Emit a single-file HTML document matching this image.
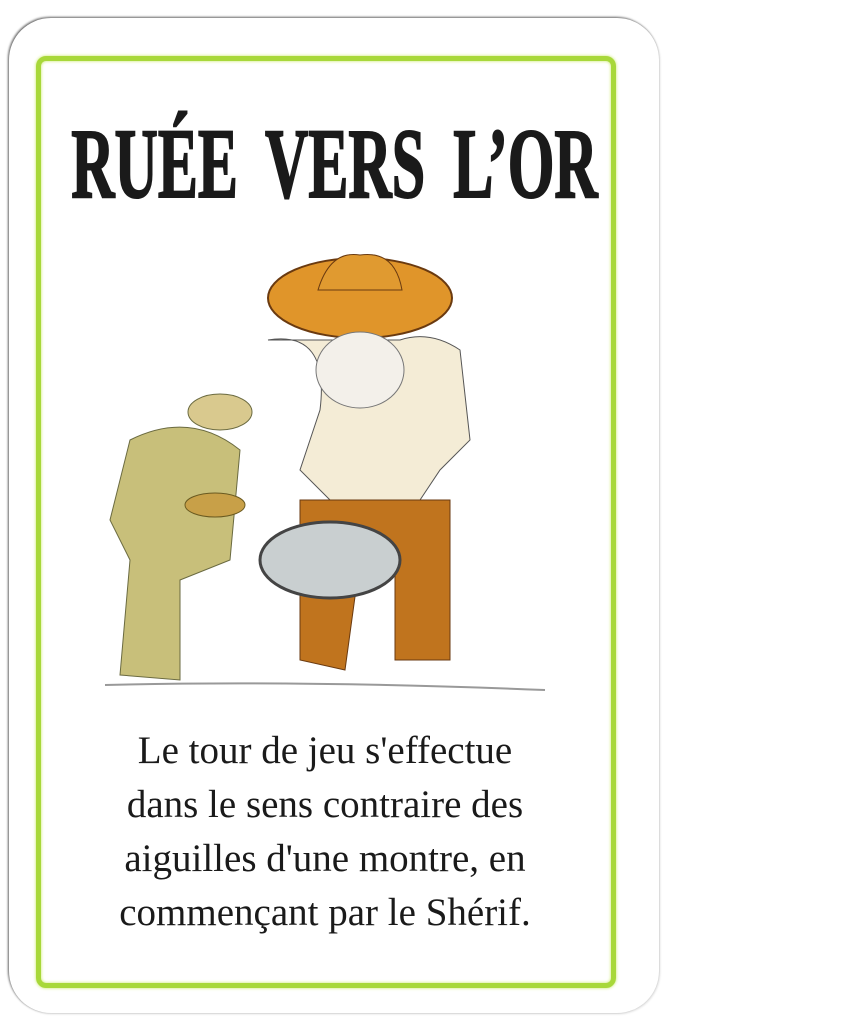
<!DOCTYPE html><html><head><style>
body{margin:0;width:864px;height:1033px;background:#fff;position:relative;overflow:hidden}
.card{position:absolute;left:9px;top:18px;width:650px;height:995px;border-radius:42px;background:#fff;box-shadow:-1px -1px 2px #666, 1px 1px 2px #ddd}
.border{position:absolute;left:36px;top:56px;width:570px;height:922px;border:5px solid #a8d83a;border-radius:10px;box-shadow:0 0 3px #c8e860, inset 0 0 3px #c8e860}
.title{position:absolute;top:106px;left:-100px;width:856px;text-align:center;font:900 100px/116px "Liberation Serif",serif;-webkit-text-stroke:2px #1a1a1a;color:#1a1a1a;transform:scaleX(0.6);transform-origin:center;word-spacing:22px;white-space:nowrap}
.txt{position:absolute;left:30px;width:590px;top:724px;text-align:center;font:39px/54px "Liberation Serif",serif;color:#1a1a1a}
</style></head><body>
<div class="card"></div>
<div class="border"></div>
<div class="title">RUÉE VERS L’OR</div>
<svg style="position:absolute;left:0;top:0" width="864" height="1033">
<ellipse cx="360" cy="298" rx="92" ry="40" fill="#e0952a" stroke="#6a3a10" stroke-width="2"/>
<path d="M318 290 Q330 250 360 255 Q395 250 402 290 Z" fill="#e09a30" stroke="#6a3a10"/>
<path d="M268 340 Q330 330 320 410 L300 470 L330 500 L420 500 L440 470 L470 440 L460 350 Q430 330 400 340 Z" fill="#f4ecd6" stroke="#555"/>
<ellipse cx="360" cy="370" rx="44" ry="38" fill="#f3f0ea" stroke="#777"/>
<path d="M300 500 L300 660 L345 670 L360 560 L395 560 L395 660 L450 660 L450 500 Z" fill="#c0741e" stroke="#6a3a10"/>
<ellipse cx="330" cy="560" rx="70" ry="38" fill="#c9cfd0" stroke="#444" stroke-width="3"/>
<path d="M130 440 Q190 410 240 450 L230 560 L180 580 L180 680 L120 675 L130 560 L110 520 Z" fill="#c8bf7a" stroke="#6a6a40"/>
<ellipse cx="220" cy="412" rx="32" ry="18" fill="#d9c98e" stroke="#6a6a40"/>
<ellipse cx="215" cy="505" rx="30" ry="12" fill="#c8a048" stroke="#6a5a20"/>
<path d="M105 685 Q300 680 545 690" stroke="#999" stroke-width="2" fill="none"/>
</svg>
<div class="txt">Le tour de jeu s'effectue<br>dans le sens contraire des<br>aiguilles d'une montre, en<br>commençant par le Shérif.</div>
</body></html>
